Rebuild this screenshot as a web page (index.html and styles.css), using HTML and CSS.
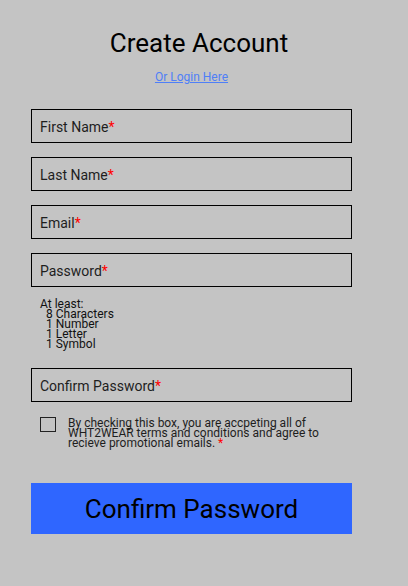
FILE: index.html
```html
<!DOCTYPE html>
<html>
<head>
<meta charset="utf-8">
<link rel="stylesheet" href="styles.css">
</head>
<body>
<main class="page">
  <h1 class="title">Create Account</h1>
  <a class="login" href="#">Or Login Here</a>
  <div class="fields">
    <div class="field">First Name<span class="req">*</span></div>
    <div class="field">Last Name<span class="req">*</span></div>
    <div class="field">Email<span class="req">*</span></div>
    <div class="field">Password<span class="req">*</span></div>
  </div>
  <div class="hint">
    <div>At least:</div>
    <div class="hint-item">8 Characters</div>
    <div class="hint-item">1 Number</div>
    <div class="hint-item">1 Letter</div>
    <div class="hint-item">1 Symbol</div>
  </div>
  <div class="field confirm">Confirm Password<span class="req">*</span></div>
  <div class="terms">
    <span class="check"></span>
    <p class="terms-text">By checking this box, you are accpeting all of WHT2WEAR terms and conditions and agree to recieve promotional emails. <span class="req">*</span></p>
  </div>
  <button class="submit">Confirm Password</button>
</main>
</body>
</html>
```
FILE: styles.css
```css
html, body {
  margin: 0;
  padding: 0;
  background: #c4c4c4;
}
body {
  font-family: Roboto, "Liberation Sans", sans-serif;
  color: #1e1e1e;
  width: 408px;
  height: 586px;
}
.page {
  width: 321px;
  margin-left: 31px;
  padding-top: 28px;
  display: flex;
  flex-direction: column;
}
.title {
  margin: 0;
  font-size: 26px;
  line-height: 30px;
  font-weight: 400;
  color: #000;
  text-align: center;
  padding-left: 15px;
}
.login {
  align-self: center;
  margin-top: 12px;
  font-size: 12px;
  line-height: 14px;
  color: #4f7ff7;
  text-decoration: underline;
}
.fields {
  margin-top: 25px;
  display: flex;
  flex-direction: column;
  gap: 14px;
}
.field {
  box-sizing: border-box;
  height: 34px;
  border: 1px solid #000;
  padding: 9px 0 0 8px;
  font-size: 14px;
  line-height: 16px;
  color: #1e1e1e;
}
.req {
  color: #ff0000;
}
.hint {
  margin-top: 12px;
  padding-left: 9px;
  font-size: 12px;
  line-height: 10px;
  color: #111;
}
.hint-item {
  padding-left: 6px;
}
.confirm {
  margin-top: 19px;
}
.terms {
  margin-top: 16px;
  display: flex;
  align-items: flex-start;
  gap: 12px;
  padding-left: 9px;
}
.check {
  flex: none;
  box-sizing: border-box;
  width: 16px;
  height: 15px;
  border: 1px solid #222;
  margin-top: -1px;
}
.terms-text {
  margin: 0;
  font-size: 12px;
  line-height: 10px;
  color: #1e1e1e;
}
.submit {
  margin-top: 35px;
  height: 51px;
  border: none;
  padding: 0;
  background: #2f66ff;
  font-family: Roboto, "Liberation Sans", sans-serif;
  font-size: 26px;
  color: #000;
}
```
